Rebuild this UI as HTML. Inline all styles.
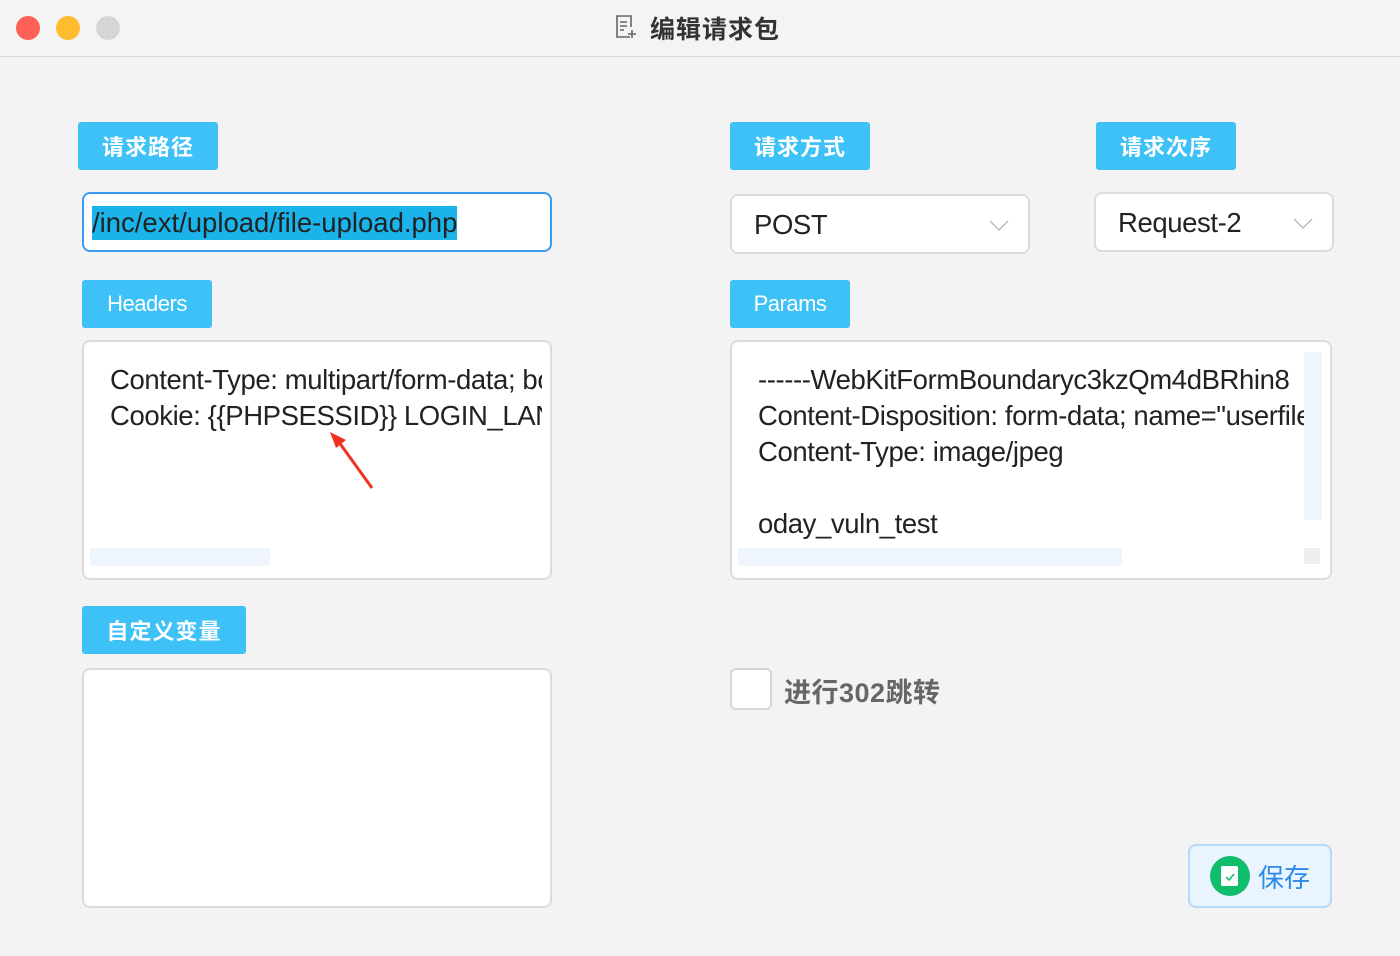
<!DOCTYPE html><html><head><meta charset="utf-8"><style>
body{margin:0;width:1400px;height:956px;background:#f3f3f3;font-family:"Liberation Sans","Noto Sans CJK SC",sans-serif;position:relative;overflow:hidden}
.a{position:absolute}
.tag{position:absolute;background:#3ec1f7;color:#fff;font-size:22px;display:flex;align-items:center;justify-content:center;border-radius:3px;height:48px}
.cn{font-weight:bold;letter-spacing:1px}
.box{position:absolute;background:#fff;border:2px solid #dcdcdc;border-radius:8px;box-sizing:border-box;overflow:hidden}
.txt{position:absolute;font-size:27.5px;color:#222;white-space:nowrap;letter-spacing:-0.4px;line-height:36px;overflow:hidden}
</style></head><body>
<div class="a" style="left:0;top:0;width:1400px;height:56px;border-bottom:1px solid #d8d8d8;background:#f4f4f4"></div>
<div class="a" style="left:16px;top:16px;width:24px;height:24px;border-radius:50%;background:#fe5f57"></div>
<div class="a" style="left:56px;top:16px;width:24px;height:24px;border-radius:50%;background:#febc2e"></div>
<div class="a" style="left:96px;top:16px;width:24px;height:24px;border-radius:50%;background:#d6d6d6"></div>
<svg class="a" style="left:614px;top:14px" width="24" height="26" viewBox="0 0 24 26" fill="none" stroke="#666" stroke-width="1.6"><path d="M16 23H3V2h14v11M6 8h7M6 12h7M6 16h4M18 16v8M14 20h8"/></svg>
<div class="a" style="left:650px;top:10px;font-size:25px;font-weight:bold;color:#333;letter-spacing:1px">编辑请求包</div>
<div class="tag cn" style="left:78px;top:122px;width:140px">请求路径</div>
<div class="tag cn" style="left:730px;top:122px;width:140px">请求方式</div>
<div class="tag cn" style="left:1096px;top:122px;width:140px">请求次序</div>
<div class="box" style="left:82px;top:192px;width:470px;height:60px;border-color:#3a9cf5"><div class="a" style="left:8px;top:12px;height:34px;background:#1ab4ea;font-size:27.5px;color:#222;letter-spacing:0;line-height:34px">/inc/ext/upload/file-upload.php</div></div>
<div class="box" style="left:730px;top:194px;width:300px;height:60px"><div class="txt" style="left:22px;top:11px">POST</div><svg class="a" style="left:256px;top:22px" width="22" height="14"><path d="M2 3l9 9 9-9" fill="none" stroke="#bbb" stroke-width="1.5"/></svg></div>
<div class="box" style="left:1094px;top:192px;width:240px;height:60px"><div class="txt" style="left:22px;top:11px">Request-2</div><svg class="a" style="left:196px;top:22px" width="22" height="14"><path d="M2 3l9 9 9-9" fill="none" stroke="#bbb" stroke-width="1.5"/></svg></div>
<div class="tag" style="left:82px;top:280px;width:130px;font-size:22px;letter-spacing:-0.5px">Headers</div>
<div class="tag" style="left:730px;top:280px;width:120px;letter-spacing:-0.5px">Params</div>
<div class="box" style="left:82px;top:340px;width:470px;height:240px"><div class="txt" style="left:26px;top:20px;width:432px">Content-Type: multipart/form-data; boundary<br>Cookie: {{PHPSESSID}} LOGIN_LANG</div><div class="a" style="left:6px;top:206px;width:180px;height:18px;background:#eef5fc"></div></div>
<svg class="a" style="left:328px;top:430px" width="50" height="62"><path d="M44 58L8 8" stroke="#f0321f" stroke-width="3"/><path d="M2 2l16 8-10 8z" fill="#f0321f"/></svg>
<div class="box" style="left:730px;top:340px;width:602px;height:240px"><div class="txt" style="left:26px;top:20px;width:546px">------WebKitFormBoundaryc3kzQm4dBRhin8<br>Content-Disposition: form-data; name="userfile"<br>Content-Type: image/jpeg<br><br>oday_vuln_test</div><div class="a" style="left:572px;top:10px;width:18px;height:168px;background:#eef5fc"></div><div class="a" style="left:572px;top:206px;width:16px;height:16px;background:#eee"></div><div class="a" style="left:6px;top:206px;width:384px;height:18px;background:#eef5fc"></div></div>
<div class="tag cn" style="left:82px;top:606px;width:164px">自定义变量</div>
<div class="box" style="left:82px;top:668px;width:470px;height:240px"></div>
<div class="a" style="left:730px;top:668px;width:38px;height:38px;border:2px solid #d6d6d6;border-radius:6px;background:#fff"></div>
<div class="a" style="left:784px;top:671px;font-size:27px;color:#666;font-weight:bold;letter-spacing:0.5px">进行302跳转</div>
<div class="a" style="left:1188px;top:844px;width:140px;height:60px;border:2px solid #b8d9fa;border-radius:8px;background:#e9f4fe"></div>
<div class="a" style="left:1210px;top:856px;width:40px;height:40px;border-radius:50%;background:#0fbd6b"></div>
<div class="a" style="left:1221px;top:866px;width:17px;height:20px;background:#fff;border-radius:2px"></div>
<svg class="a" style="left:1223px;top:872px" width="14" height="10"><path d="M3 5l3 3 5-6" fill="none" stroke="#0fbd6b" stroke-width="1.5"/></svg>
<div class="a" style="left:1258px;top:858px;font-size:26px;color:#2a8ce8">保存</div>
</body></html>
